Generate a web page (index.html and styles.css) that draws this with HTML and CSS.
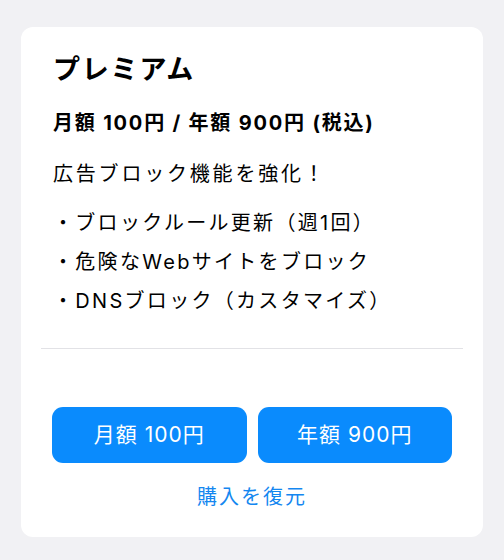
FILE: index.html
```html
<!DOCTYPE html>
<html lang="ja">
<head>
	<meta charset="utf-8" />
	<title>プレミアム</title>
	<link rel="stylesheet" href="styles.css">
</head>
<body>
	<div class="card">
		<div class="info">
			<h1 class="title">プレミアム</h1>
			<p class="price">月額 100円 / 年額 900円 (税込)</p>
			<p class="lead">広告ブロック機能を強化！</p>
			<ul class="features">
				<li>・ブロックルール更新（週1回）</li>
				<li>・危険なWebサイトをブロック</li>
				<li>・DNSブロック（カスタマイズ）</li>
			</ul>
		</div>
		<hr class="sep" />
		<div class="buttons">
			<a href="#" class="buy">月額 100円</a>
			<a href="#" class="buy">年額 900円</a>
		</div>
		<a href="#" class="restore">購入を復元</a>
	</div>
</body>
</html>
```

FILE: styles.css
```css
body { margin: 0; padding: 27px 21px 23px 21px; background-color: #f1f1f4; font-family: "Inter", "Noto Sans CJK JP", sans-serif; color: #000000; }

.card {
	background-color: #ffffff;
	border-radius: 12px;
	padding: 0 0 25px 0;
}

.info { padding: 26px 31px 0 32px; }

.title { font-size: 27px; font-weight: bold; margin: 0; line-height: 34px; letter-spacing: 1.8px; }
.price { font-size: 20px; font-weight: bold; margin: 21px 0 0 0; line-height: 30px; letter-spacing: 1.8px; }
.lead { font-size: 20px; margin: 21px 0 0 0; line-height: 30px; letter-spacing: 2.8px; }

.features { list-style: none; margin: 15px 0 0 0; padding: 0; }
.features li { font-size: 20px; line-height: 39px; letter-spacing: 2.3px; }

.sep { border: none; border-top: 1px solid #e2e2e6; margin: 27px 20px 0 20px; }

.buttons { display: flex; gap: 11px; padding: 0 31px 0 31px; margin-top: 58px; }
.buy {
	flex: 1;
	display: block;
	height: 56px;
	line-height: 56px;
	background-color: #0a8bfd;
	color: #ffffff;
	border-radius: 11px;
	text-align: center;
	font-size: 21px;
	letter-spacing: 1px;
	text-decoration: none;
}

.restore { display: block; text-align: center; font-size: 20px; color: #1487f0; text-decoration: none; margin-top: 19px; line-height: 30px; letter-spacing: 2px; }
```
